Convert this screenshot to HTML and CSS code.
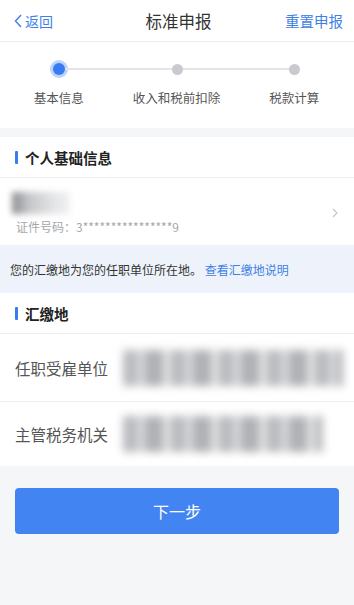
FILE: index.html
```html
<!DOCTYPE html>
<html lang="zh">
<head>
<meta charset="utf-8">
<link rel="stylesheet" href="styles.css">
</head>
<body>
<div class="page">
  <header class="nav">
    <div class="nav-left"><svg class="back" width="8" height="14" viewBox="0 0 8 14"><path d="M7 1 L1.5 7 L7 13" fill="none" stroke="#3f7fe6" stroke-width="1.4"/></svg>返回</div>
    <div class="nav-title">标准申报</div>
    <div class="nav-right">重置申报</div>
  </header>

  <section class="steps">
    <div class="track">
      <span class="dot active"></span>
      <span class="line"></span>
      <span class="dot"></span>
      <span class="line"></span>
      <span class="dot"></span>
    </div>
    <div class="labels">
      <span>基本信息</span>
      <span>收入和税前扣除</span>
      <span>税款计算</span>
    </div>
  </section>

  <section class="card card-personal">
    <h2 class="card-title"><span class="bar"></span>个人基础信息</h2>
    <div class="person">
      <div class="person-info">
        <div class="blur-name"><span class="b1"></span></div>
        <div class="id">证件号码：3****************9</div>
      </div>
      <svg class="chev" width="6" height="10" viewBox="0 0 6 10"><path d="M1 1 L5 5 L1 9" fill="none" stroke="#c4c6cb" stroke-width="1.2"/></svg>
    </div>
  </section>

  <div class="notice">您的汇缴地为您的任职单位所在地。 <span class="link">查看汇缴地说明</span></div>

  <section class="card">
    <h2 class="card-title"><span class="bar"></span>汇缴地</h2>
    <div class="row row-first">
      <span class="label">任职受雇单位</span>
      <span class="blur-val wide"></span>
    </div>
    <div class="row">
      <span class="label">主管税务机关</span>
      <span class="blur-val"></span>
    </div>
  </section>

  <div class="actions">
    <button class="next">下一步</button>
  </div>
</div>
</body>
</html>
```

FILE: styles.css
```css
* { box-sizing: border-box; margin: 0; padding: 0; }
html, body { background: #f5f6f8; }
body {
  font-family: "Noto Sans CJK SC", "Noto Sans", sans-serif;
  color: #333;
  width: 354px;
  height: 605px;
  overflow: hidden;
}
.page { display: flex; flex-direction: column; }

.nav {
  height: 42px;
  background: #fff;
  border-bottom: 1px solid #ececee;
  display: flex;
  align-items: center;
  justify-content: space-between;
  padding: 0 11px 0 14px;
}
.nav-left { display: flex; align-items: center; gap: 3px; color: #3f7fe6; font-size: 14px; width: 80px; }
.nav-title { font-size: 16.5px; color: #333; }
.nav-right { color: #3f7fe6; font-size: 14.5px; width: 80px; text-align: right; }

.steps {
  background: #fff;
  height: 86px;
  padding-top: 19px;
}
.track {
  display: flex;
  align-items: center;
  padding: 0 54px 0 53px;
  height: 16px;
}
.dot {
  width: 11px; height: 11px; border-radius: 50%;
  background: #c9cacf;
  flex: none;
}
.dot.active {
  background: #3a7cf0;
  box-shadow: 0 0 0 3px #bcd4fb;
  width: 12px; height: 12px;
}
.line { flex: 1; height: 2px; background: #e3e4e8; }
.labels {
  display: grid;
  grid-template-columns: repeat(3, 1fr);
  margin-top: 11px;
  font-size: 12.5px;
  color: #555;
  padding: 0 1px 0 0;
  text-align: center;
}

.card { background: #fff; }
.card-personal { margin-top: 9px; }
.card-title {
  font-size: 14.5px;
  font-weight: 700;
  color: #222;
  height: 41px;
  display: flex;
  align-items: center;
  padding-left: 15px;
  border-bottom: 1px solid #f0f0f2;
}
.bar {
  width: 3px; height: 13px; background: #3a7cf0; border-radius: 1px;
  margin-right: 7px;
}
.person {
  height: 67px;
  display: flex;
  align-items: center;
  justify-content: space-between;
  padding: 0 16px 0 12px;
}
.person-info { display: flex; flex-direction: column; }
.blur-name { height: 30px; width: 66px; }
.blur-name .b1 {
  display: block; width: 58px; height: 22px; margin-top: 4px;
  background: linear-gradient(90deg, #6f7076 0%, #b9babd 30%, #dcdde0 70%, #eeeeef 100%);
  filter: blur(3px);
  opacity: 0.8;
}
.id { font-size: 12px; color: #a5a7ab; margin-top: 0; padding-left: 4px; }
.chev { margin-top: 2px; }

.notice {
  background: #eef3fb;
  height: 48px;
  display: flex;
  align-items: center;
  padding-left: 10px;
  font-size: 12px;
  color: #333;
  white-space: pre;
}
.notice .link { color: #3f7fe6; }

.row {
  height: 65px;
  display: flex;
  align-items: center;
  padding-left: 15px;
  border-top: 1px solid #f0f0f2;
}
.row-first { border-top: none; height: 67px; }
.label { font-size: 15.5px; color: #555; width: 108px; flex: none; }
.blur-val {
  display: block;
  width: 200px; height: 36px;
  background: repeating-linear-gradient(90deg, #9c9ea3 0 14px, #c8c9cc 14px 22px, #8f9196 22px 40px, #d6d7d9 40px 48px);
  filter: blur(4px);
  opacity: 0.7;
}
.blur-val.wide { width: 220px; }

.actions { padding: 22px 15px 0; }
.next {
  width: 100%;
  height: 46px;
  border: none;
  border-radius: 4px;
  background: #4285f2;
  color: #fff;
  font-family: inherit;
  font-size: 16px;
}
```
